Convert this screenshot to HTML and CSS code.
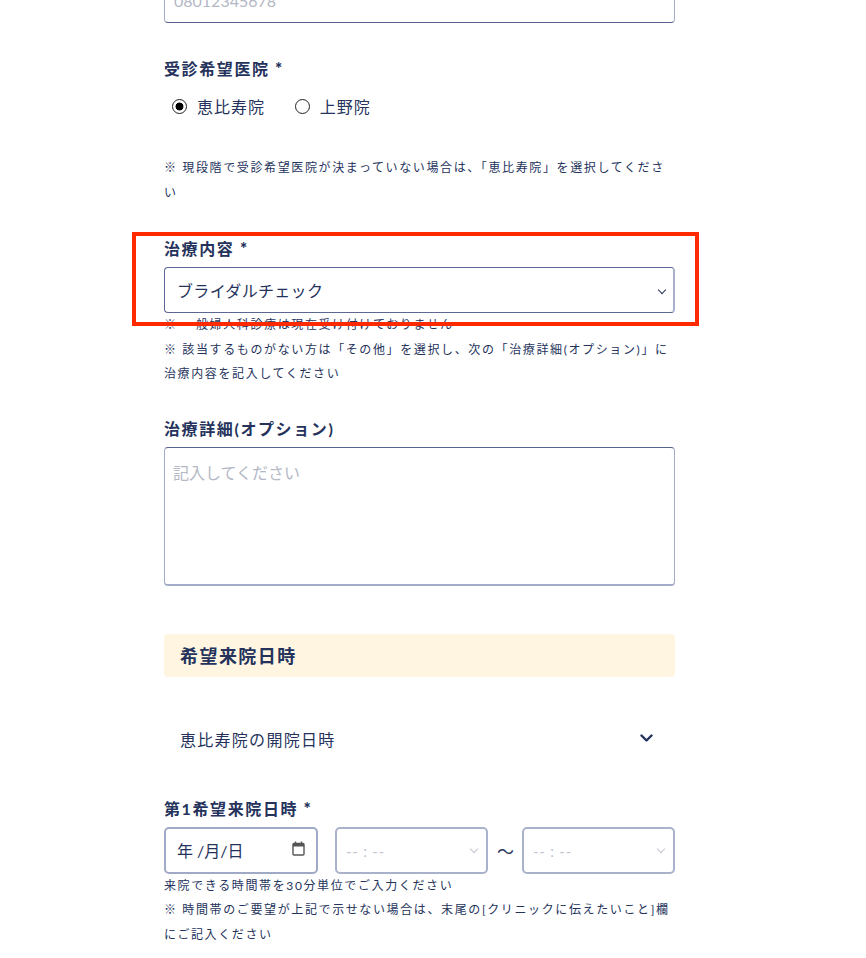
FILE: index.html
```html
<!DOCTYPE html>
<html lang="ja">
<head>
<meta charset="utf-8">
<title>予約フォーム</title>
<link rel="stylesheet" href="styles.css">
</head>
<body>
<div class="page">
  <form class="form">
    <input class="text-input phone" type="tel" placeholder="08012345678">

    <div class="field clinic">
      <div class="label">受診希望医院 <span class="req">*</span></div>
      <div class="radios">
        <label class="radio"><input type="radio" name="clinic" checked><span>恵比寿院</span></label>
        <label class="radio"><input type="radio" name="clinic"><span>上野院</span></label>
      </div>
      <p class="note first-note">※ 現段階で受診希望医院が決まっていない場合は、「恵比寿院」を選択してください</p>
    </div>

    <div class="field treatment">
      <div class="label">治療内容 <span class="req">*</span></div>
      <div class="select-wrap">
        <select class="select"><option>ブライダルチェック</option></select>
      </div>
      <p class="note">※ 一般婦人科診療は現在受け付けておりません</p>
      <p class="note">※ 該当するものがない方は「その他」を選択し、次の「治療詳細(オプション)」に治療内容を記入してください</p>
      <div class="highlight"></div>
    </div>

    <div class="field detail">
      <div class="label">治療詳細(オプション)</div>
      <textarea class="textarea" placeholder="記入してください"></textarea>
    </div>

    <div class="section-head">希望来院日時</div>

    <div class="accordion">
      <span>恵比寿院の開院日時</span>
      <svg class="acc-chevron" width="13" height="9" viewBox="0 0 13 9"><polyline points="1.5,1.5 6.5,6.5 11.5,1.5" fill="none" stroke="#25335c" stroke-width="2.4" stroke-linecap="round" stroke-linejoin="round"/></svg>
    </div>

    <div class="field visit">
      <div class="label">第1希望来院日時 <span class="req">*</span></div>
      <div class="datetime">
        <div class="date-box">
          <span>年 /月/日</span>
          <svg class="cal" width="13" height="15" viewBox="0 0 13 15"><rect x="1" y="2.5" width="11" height="11.5" rx="1" fill="none" stroke="#555" stroke-width="1.4"/><rect x="1" y="2.5" width="11" height="3" fill="#555"/><line x1="3.5" y1="0.5" x2="3.5" y2="3" stroke="#555" stroke-width="1.4"/><line x1="9.5" y1="0.5" x2="9.5" y2="3" stroke="#555" stroke-width="1.4"/></svg>
        </div>
        <div class="time-wrap"><select class="time"><option>-- : --</option></select></div>
        <span class="tilde">〜</span>
        <div class="time-wrap"><select class="time"><option>-- : --</option></select></div>
      </div>
      <p class="note">来院できる時間帯を30分単位でご入力ください</p>
      <p class="note">※ 時間帯のご要望が上記で示せない場合は、末尾の[クリニックに伝えたいこと]欄にご記入ください</p>
    </div>
  </form>
</div>
</body>
</html>
```

FILE: styles.css
```css
* { box-sizing: border-box; }

body {
  margin: 0;
  background: #fff;
  color: #25335c;
  font-family: Lato, "Noto Sans CJK JP", sans-serif;
}

.page {
  padding-left: 164px;
  width: 675px;
}

.form {
  margin-top: -23px;
}

.text-input {
  display: block;
  width: 100%;
  height: 46px;
  padding: 0 9px;
  border: 1px solid #a3abc6;
  border-bottom: 1.5px solid #56638c;
  border-radius: 4px;
  font-family: Lato, "Noto Sans CJK JP", sans-serif;
  font-size: 16px;
  color: #25335c;
  background: #fff;
}

.text-input::placeholder,
.textarea::placeholder {
  color: #b4b8c6;
}

.field {
  position: relative;
  margin-top: 34px;
}

.label {
  font-size: 16px;
  font-weight: 700;
  line-height: 24px;
  letter-spacing: 0.1em;
  margin-bottom: 6px;
}

.req {
  font-size: 17px;
  font-weight: 900;
}

.radios {
  display: flex;
  gap: 30px;
  padding-left: 8px;
  margin-top: 13px;
  height: 24px;
}

.radio {
  display: flex;
  align-items: center;
  gap: 10px;
  font-size: 16px;
  letter-spacing: 0.06em;
}

.radio input {
  appearance: none;
  -webkit-appearance: none;
  margin: 0;
  width: 15px;
  height: 15px;
  border: 1.5px solid #222;
  border-radius: 50%;
  background: #fff;
}

.radio input:checked {
  background: radial-gradient(circle, #000 0 3.6px, #fff 4.3px);
}

.note {
  margin: 0;
  font-size: 12px;
  line-height: 24.5px;
  letter-spacing: 1.62px;
}

.first-note {
  margin-top: 38px;
}

.treatment {
  margin-top: 32px;
}

.select-wrap,
.time-wrap {
  position: relative;
}

.select {
  display: block;
  width: 100%;
  height: 46px;
  appearance: none;
  -webkit-appearance: none;
  padding: 0 12px;
  border: 1px solid #5b6892;
  border-right: 2px solid #a8b0ca;
  border-radius: 4px;
  background: #fff;
  color: #25335c;
  font-family: Lato, "Noto Sans CJK JP", sans-serif;
  font-size: 16px;
  letter-spacing: 0.02em;
}

.select-wrap::after {
  content: "";
  position: absolute;
  right: 10px;
  top: 20px;
  width: 5px;
  height: 5px;
  border-right: 1.5px solid #25335c;
  border-bottom: 1.5px solid #25335c;
  transform: rotate(45deg);
}

.highlight {
  position: absolute;
  left: -32px;
  top: -5px;
  width: 567px;
  height: 94px;
  border: 4px solid #ff2a00;
  pointer-events: none;
}

.detail {
  margin-top: 30px;
}

.textarea {
  display: block;
  width: 100%;
  height: 139px;
  padding: 12px 8px;
  border-style: solid;
  border-width: 1px 1.5px 2px 1.5px;
  border-color: #56638c #a3abc6 #a3abc6 #a3abc6;
  border-radius: 4px;
  resize: none;
  font-family: Lato, "Noto Sans CJK JP", sans-serif;
  font-size: 16px;
  color: #25335c;
}

.section-head {
  margin-top: 48px;
  height: 43px;
  padding-left: 16px;
  display: flex;
  align-items: center;
  background: #fff5e1;
  border-radius: 4px;
  font-size: 18px;
  font-weight: 700;
  letter-spacing: 0.08em;
}

.accordion {
  margin-top: 38px;
  height: 48px;
  padding: 0 22px 0 16px;
  display: flex;
  align-items: center;
  justify-content: space-between;
  font-size: 16px;
  letter-spacing: 0.08em;
}

.visit {
  margin-top: 34px;
}

.datetime {
  display: flex;
  align-items: center;
  height: 47px;
}

.date-box {
  width: 154px;
  height: 47px;
  margin-right: 17px;
  padding: 0 11px 0 11px;
  display: flex;
  align-items: center;
  justify-content: space-between;
  border: 2px solid #a0a9c5;
  border-radius: 5px;
  font-size: 16px;
}

.cal {
  margin-top: -3px;
}

.time-wrap {
  flex: 1;
}

.time {
  display: block;
  width: 100%;
  height: 47px;
  appearance: none;
  -webkit-appearance: none;
  padding: 2px 9px 0;
  border: 2px solid #aab2cb;
  border-radius: 5px;
  background: #fff;
  color: #c2c6d2;
  font-family: Lato, "Noto Sans CJK JP", sans-serif;
  font-size: 15px;
  letter-spacing: 0.05em;
}

.time-wrap::after {
  content: "";
  position: absolute;
  right: 11px;
  top: 19px;
  width: 5px;
  height: 5px;
  border-right: 1px solid #c2c6d2;
  border-bottom: 1px solid #c2c6d2;
  transform: rotate(45deg);
}

.tilde {
  padding: 0 8px 0 9px;
  font-size: 17px;
  line-height: 1;
  margin-top: 3px;
}
```
